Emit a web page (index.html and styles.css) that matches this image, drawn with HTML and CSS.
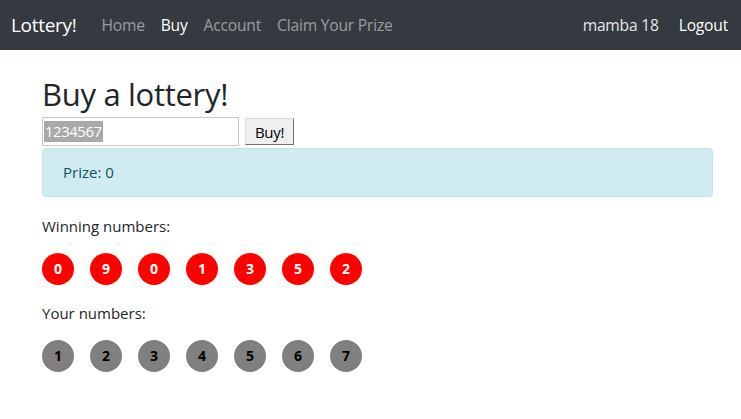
FILE: index.html
```html
<!DOCTYPE html>
<html>
<head>
<meta charset="utf-8">
<link rel="stylesheet" href="styles.css">
</head>
<body>
<nav class="navbar">
  <a class="brand">Lottery!</a>
  <ul class="nav">
    <li class="link">Home</li>
    <li class="link active">Buy</li>
    <li class="link">Account</li>
    <li class="link">Claim Your Prize</li>
  </ul>
  <ul class="nav right">
    <li class="link user">mamba 18</li>
    <li class="link active">Logout</li>
  </ul>
</nav>
<main class="container">
  <h1 class="title">Buy a lottery!</h1>
  <div class="form">
    <div class="input"><span class="sel">1234567</span></div>
    <button class="btn">Buy!</button>
  </div>
  <div class="alert">Prize: 0</div>
  <p class="label">Winning numbers:</p>
  <div class="balls">
    <span class="ball red">0</span><span class="ball red">9</span><span class="ball red">0</span><span class="ball red">1</span><span class="ball red">3</span><span class="ball red">5</span><span class="ball red">2</span>
  </div>
  <p class="label">Your numbers:</p>
  <div class="balls">
    <span class="ball gray">1</span><span class="ball gray">2</span><span class="ball gray">3</span><span class="ball gray">4</span><span class="ball gray">5</span><span class="ball gray">6</span><span class="ball gray">7</span>
  </div>
</main>
</body>
</html>
```
FILE: styles.css
```css
* { box-sizing: border-box; }
body {
  margin: 0;
  font-family: "Open Sans", "Noto Sans", sans-serif;
  font-size: 15px;
  color: #212529;
  background: #fff;
}
.navbar {
  height: 50px;
  background: #343a40;
  display: flex;
  align-items: center;
  padding: 0 13px 0 11px;
}
.brand {
  color: #fff;
  font-size: 19px;
  margin-right: 17px;
  letter-spacing: -0.3px;
}
.nav {
  list-style: none;
  margin: 0;
  padding: 0;
  display: flex;
}
.nav.right { margin-left: auto; }
.link {
  color: rgba(255,255,255,.5);
  padding: 0 8px;
  font-size: 15.6px;
  letter-spacing: -0.2px;
}
.link.active { color: #fff; }
.link.user { color: rgba(255,255,255,.9); padding-right: 12px; }
.nav.right .link:last-child { padding-right: 0; }
.container {
  padding: 0 28px 0 42px;
}
.title {
  font-weight: 400;
  font-size: 31px;
  margin: 25px 0 3px;
  line-height: 1.25;
  letter-spacing: -0.3px;
}
.form {
  display: flex;
  align-items: center;
  gap: 6px;
  height: 30px;
}
.input {
  width: 197px;
  height: 29px;
  border: 1px solid #c8c8c8;
  padding: 1px 1px;
  display: flex;
  align-items: center;
}
.sel {
  background: #a9a9a9;
  color: #fff;
  font-size: 15px;
  line-height: 21px;
  letter-spacing: -0.5px;
  padding: 0 1px;
}
.btn {
  width: 49px;
  height: 27px;
  font-family: inherit;
  font-size: 15px;
  color: #000;
  background: #efefef;
  border: 1px solid;
  border-color: #dcdcdc #707070 #707070 #dcdcdc;
  padding: 0;
  letter-spacing: -0.3px;
}
.alert {
  margin-top: 1px;
  height: 49px;
  background: #d1ecf1;
  border: 1px solid #bee5eb;
  border-radius: 4px;
  color: #0c5460;
  padding: 0 20px;
  display: flex;
  align-items: center;
}
.label {
  margin: 18px 0 0;
  line-height: 22px;
}
.balls + .label { margin-top: 17px; }
.balls {
  display: flex;
  gap: 16px;
  margin-top: 16px;
}
.ball {
  width: 32px;
  height: 32px;
  border-radius: 50%;
  display: flex;
  align-items: center;
  justify-content: center;
  font-weight: 700;
  font-size: 14px;
}
.red { background: #ff0000; color: #fff; }
.gray { background: #808080; color: #000; }
```
